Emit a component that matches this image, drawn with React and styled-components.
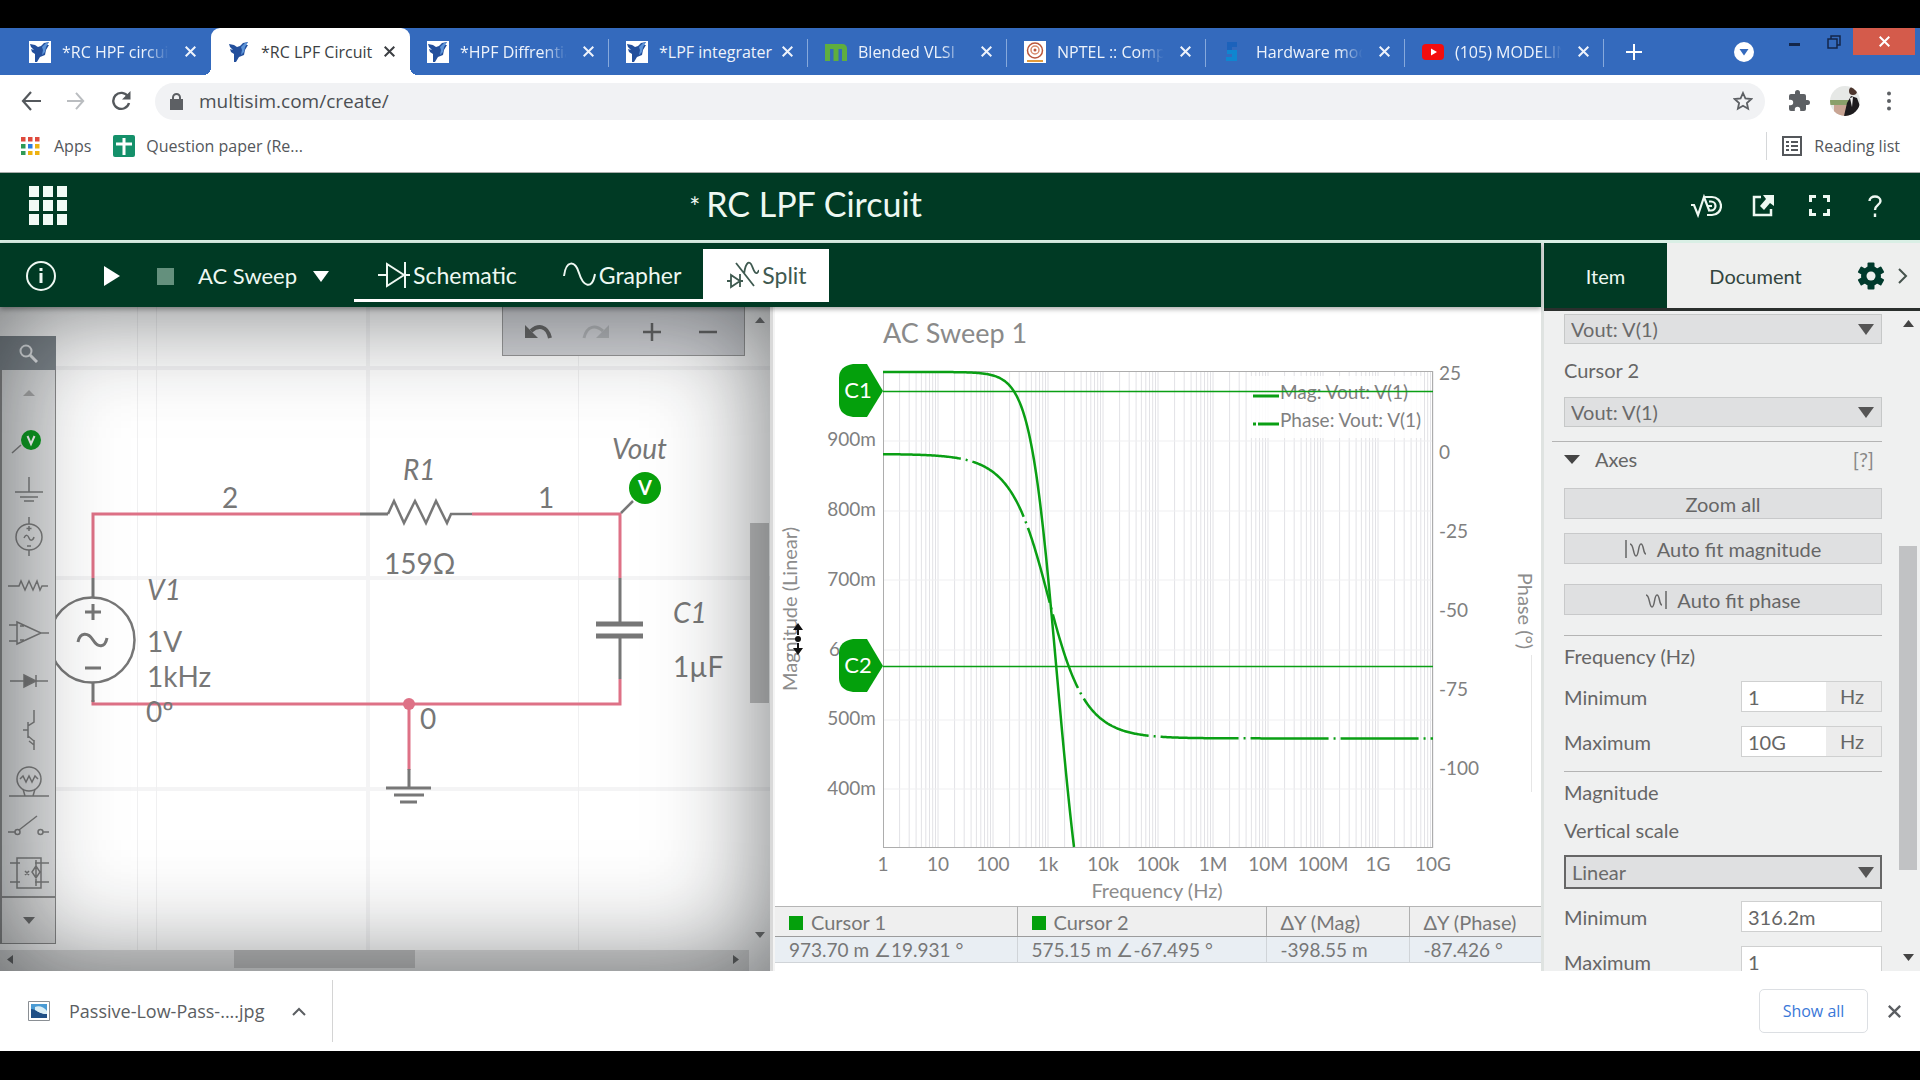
import React from "react";
import styled, { createGlobalStyle, css } from "styled-components";

const lato = `Lato, "Open Sans", sans-serif`;
const chromeFont = `"Open Sans", "Noto Sans", sans-serif`;
const green = "#003a24";
const trace = "#0a9f14";

const Global = createGlobalStyle`
  * { box-sizing: border-box; }
  body { margin: 0; background: #000; font-family: ${lato}; color: #666; }
  button, input, select { font: inherit; color: inherit; margin: 0; border-radius: 0; }
  button { border: 0; padding: 0; background: none; cursor: pointer; }
  svg { display: block; flex: none; }
`;

const Screen = styled.div`
  display: flex;
  flex-direction: column;
  min-height: 100vh;
  padding: 28px 0 29px;
  background: #000;
`;

/* ---------- browser chrome ---------- */
const TabStrip = styled.div`
  display: flex;
  height: 47px;
  padding-left: 12px;
  background: #346abd;
  font: 16px/24px ${chromeFont};
`;
const Tab = styled.div`
  position: relative;
  display: flex;
  align-items: center;
  width: 199px;
  padding: 0 14px 0 17px;
  gap: 11px;
  color: ${(p) => (p.$active ? "#3c3f43" : "#eef3fb")};
  ${(p) =>
    p.$active
      ? css`
          background: #fff;
          border-radius: 9px 9px 0 0;
          &::before, &::after {
            content: "";
            position: absolute;
            bottom: 0;
            width: 8px;
            height: 8px;
          }
          &::before { left: -8px; background: radial-gradient(circle at 0 0, #346abd 8px, #fff 8px); }
          &::after { right: -8px; background: radial-gradient(circle at 100% 0, #346abd 8px, #fff 8px); }
        `
      : ""}
  ${(p) =>
    p.$divider
      ? css`
          &::after {
            content: "";
            position: absolute;
            right: 0;
            top: 11px;
            width: 1px;
            height: 28px;
            background: #86a9dc;
          }
        `
      : ""}
`;
const TabTitle = styled.button`
  flex: 1;
  min-width: 0;
  margin-right: -6px;
  overflow: hidden;
  white-space: nowrap;
  text-align: left;
  ${(p) => (p.$fade ? "mask-image: linear-gradient(90deg, #000 72%, transparent 92%);" : "")}
`;
const IconButton = styled.button`
  display: grid;
  place-items: center;
  flex: none;
  width: ${(p) => p.$w || 24}px;
  height: ${(p) => p.$h || 24}px;
  color: ${(p) => p.$c || "inherit"};
`;
const TabClose = styled(IconButton)`width: 14px;`;
const WindowControls = styled.div`
  display: flex;
  align-items: flex-start;
  margin-left: auto;
  color: #13264a;
`;
const WindowClose = styled(IconButton)`
  width: 62px;
  height: 27px;
  margin: 0 5px 0 7px;
  background: #d45b4b;
  color: #fff;
`;
const AddressRow = styled.div`
  display: flex;
  align-items: center;
  height: 52px;
  padding: 0 16px;
  background: #fff;
  color: #5d6064;
`;
const Omnibox = styled.label`
  display: flex;
  flex: 1;
  align-items: center;
  gap: 16px;
  height: 37px;
  margin: 0 22px 0 19px;
  padding: 0 10px 0 15px;
  border-radius: 19px;
  background: #f1f2f4;
  input {
    flex: 1;
    min-width: 0;
    padding: 0;
    border: 0;
    outline: 0;
    background: none;
    color: #4c4f53;
    font: 19px/24px ${chromeFont};
  }
`;
const Avatar = styled.button`
  width: 30px;
  height: 30px;
  margin: 0 14px 0 19px;
  overflow: hidden;
  border-radius: 50%;
`;
const Bookmarks = styled.nav`
  display: flex;
  align-items: center;
  height: 46px;
  padding: 0 20px 7px;
  border-bottom: 1px solid #a8adab;
  background: #fff;
  color: #54575b;
  font: 16px/24px ${chromeFont};
`;
const Bookmark = styled.a`
  display: flex;
  align-items: center;
  gap: ${(p) => p.$gap}px;
  margin-right: 22px;
  color: inherit;
  text-decoration: none;
`;
const ReadingList = styled.button`
  display: flex;
  align-items: center;
  gap: 12px;
  height: 28px;
  margin-left: auto;
  padding-left: 15px;
  border-left: 1px solid #d5d7d9;
`;

/* ---------- application header ---------- */
const AppHeader = styled.header`
  display: grid;
  grid-template-columns: 1fr auto 1fr;
  align-items: center;
  height: 70px;
  padding: 0 30px 2px 28px;
  border-bottom: 3px solid #d9efe5;
  background: ${green};
  color: #eef8f2;
  h1 { margin: 0; font: 400 34px/44px ${lato}; }
`;
const Star = styled.span`
  margin-right: 6px;
  font-size: 26px;
`;
const TitleSlot = styled.div`
  padding-right: 307px;
`;
const HeaderActions = styled.div`
  display: flex;
  justify-content: flex-end;
  gap: 26px;
`;
const Body = styled.div`
  display: flex;
  flex: 1;
  min-height: 0;
  background: #fff;
`;
const LeftColumn = styled.div`
  display: flex;
  flex: 1;
  flex-direction: column;
  min-width: 0;
`;
const Toolbar = styled.div`
  position: relative;
  z-index: 2;
  display: flex;
  align-items: center;
  height: 64px;
  padding: 2px 0 0 22px;
  background: ${green};
  box-shadow: 0 2px 5px rgba(0, 0, 0, 0.35);
  color: #eef8f2;
  font: 22px/28px ${lato};
`;
const SimulationType = styled.button`
  display: flex;
  align-items: center;
  gap: 16px;
  margin: 0 25px 0 24px;
`;
const Views = styled.div`
  display: flex;
  align-self: flex-end;
  height: 53px;
  margin-bottom: 5px;
  font-size: 23px;
`;
const View = styled.button`
  display: flex;
  align-items: center;
  gap: 3px;
  padding: 2px 22px 0 24px;
  border-bottom: 3px solid #fff;
  background: ${(p) => (p.$on ? "#fff" : "none")};
  color: ${(p) => (p.$on ? "#3f5a50" : "#eef8f2")};
`;
const Panes = styled.div`
  display: grid;
  grid-template-columns: 770fr 5px 766fr;
  flex: 1;
`;
const Splitter = styled.div`
  border-left: 3px solid #d9d9d9;
  background: #f4f4f4;
`;

/* ---------- schematic ---------- */
const SchematicPane = styled.section`
  position: relative;
  display: grid;
  grid-template: 1fr 21px / 56px 1fr 21px;
  overflow: hidden;
  &::after {
    content: "";
    position: absolute;
    inset: 0;
    pointer-events: none;
    box-shadow: inset 0 0 110px rgba(20, 24, 28, 0.62);
  }
`;
const Circuit = styled.svg`
  position: absolute;
  left: 0;
  top: 0;
  font: 28px ${lato};
  fill: #777;
`;
const Palette = styled.div`
  position: relative;
  display: flex;
  flex-direction: column;
  padding-top: 29px;
`;
const Search = styled(IconButton)`
  width: 56px;
  height: 34px;
  background: #80888e;
  color: #eef0f2;
`;
const PartList = styled.div`
  display: flex;
  flex-direction: column;
  border: solid #8b8b8b;
  border-width: 0 1px 2px 2px;
  background: #dfe0e1;
`;
const PaletteEnd = styled(IconButton)`
  width: 56px;
  height: 46px;
  border: solid #8b8b8b;
  border-width: 0 1px 1px 2px;
  background: #e2e2e2;
  color: #6d6d6d;
`;
const EditBar = styled.div`
  position: relative;
  display: flex;
  align-items: center;
  justify-content: space-around;
  justify-self: end;
  width: 243px;
  height: 49px;
  margin-right: 4px;
  padding: 2px 8px 0;
  border: 1px solid #999;
  border-top: 0;
  background: #d3d4d8;
  color: #666;
`;
const VScroll = styled.div`
  position: relative;
  display: flex;
  flex-direction: column;
  align-items: center;
  justify-content: space-between;
  padding: 10px 0 12px;
  color: #777;
`;
const HScroll = styled.div`
  position: relative;
  display: flex;
  grid-column: 1 / 3;
  align-items: center;
  justify-content: space-between;
  padding: 0 10px 3px 7px;
  background: #dedede;
  color: #666;
`;
const Thumb = styled.div`
  width: ${(p) => p.$w}px;
  height: ${(p) => p.$h}px;
  margin: ${(p) => p.$m || "0"};
  background: ${(p) => p.$bg || "#c4c4c4"};
`;

/* ---------- grapher ---------- */
const GraphPane = styled.section`
  display: flex;
  flex-direction: column;
  background: #fff;
`;
const Plot = styled.svg`
  font: 19px ${lato};
  fill: #808080;
`;
const Readout = styled.table`
  width: 100%;
  border-collapse: collapse;
  table-layout: fixed;
  color: #777;
  font: 20px/24px ${lato};
  th, td {
    padding: 0 0 0 14px;
    border-right: 1px solid #b0b0b0;
    font-weight: 400;
    text-align: left;
    white-space: nowrap;
  }
  th { height: 30px; border-top: 1px solid #b5b5b5; border-bottom: 1px solid #9c9c9c; background: #efefef; }
  td { height: 26px; border-color: #d0d4d8; border-bottom: 1px solid #d0d4d8; background: #e9eef3; font-size: 19px; }
  th:last-child, td:last-child { border-right: 0; }
`;
const Swatch = styled.span`
  display: inline-block;
  width: 14px;
  height: 14px;
  margin-right: 8px;
  background: #04a00c;
`;

/* ---------- side panel ---------- */
const Side = styled.aside`
  display: flex;
  flex-direction: column;
  width: 379px;
  border-left: 3px solid #dfe3e1;
  background: #eff0f0;
  font: 20px/26px ${lato};
`;
const SideTabs = styled.div`
  display: flex;
  align-items: center;
  height: 68px;
  padding-right: 12px;
  border-bottom: 3px solid #2a2f2d;
  background: #eeefee;
`;
const SideTab = styled.button`
  align-self: stretch;
  flex: ${(p) => (p.$on ? "0 0 123px" : "1")};
  background: ${(p) => (p.$on ? green : "none")};
  color: ${(p) => (p.$on ? "#eef8f2" : "#33453e")};
`;
const SideBody = styled.div`
  display: flex;
  flex: 1 1 0;
  min-height: 0;
  overflow: hidden;
`;
const Form = styled.form`
  flex: 1;
  padding: 3px 16px 0 20px;
`;
const Rule = styled.hr`
  margin: ${(p) => p.$m};
  border: 0;
  border-top: 1px solid #b4b4b4;
`;
const Caption = styled.div`
  display: block;
  margin: ${(p) => p.$m};
`;
const SelectBox = styled.div`
  position: relative;
  margin-bottom: ${(p) => (p.$focus ? 12 : 0)}px;
  select {
    display: block;
    width: 100%;
    height: ${(p) => (p.$focus ? 34 : 30)}px;
    padding: 0 6px;
    appearance: none;
    border: ${(p) => (p.$focus ? "2px solid #666" : "1px solid #c6c8c8")};
    outline: 0;
    background: #dfe0e1;
    color: #6a6a6a;
  }
  svg {
    position: absolute;
    right: 8px;
    top: 50%;
    margin-top: -5px;
    pointer-events: none;
  }
`;
const Section = styled.div`
  display: flex;
  align-items: center;
  height: 28px;
  margin-bottom: 15px;
  padding-right: 8px;
  a { margin-left: auto; color: #888; text-decoration: none; }
  button { display: flex; align-items: center; gap: 15px; }
`;
const FormButton = styled.button`
  display: flex;
  align-items: center;
  justify-content: center;
  gap: 10px;
  width: 100%;
  height: 31px;
  margin-bottom: ${(p) => p.$mb}px;
  border: 1px solid #c8c9ca;
  background: #dfe0e1;
`;
const Field = styled.div`
  display: flex;
  align-items: center;
  justify-content: space-between;
  margin-bottom: 14px;
`;
const FieldBox = styled.div`
  display: flex;
  width: 141px;
  height: 31px;
  border: 1px solid #cfd0d0;
  input { flex: 1; min-width: 0; padding: 0 6px; border: 0; outline: 0; background: #fff; }
  span { width: 55px; padding-left: 14px; background: #ececec; line-height: 28px; }
`;
const SideScroll = styled(VScroll)`
  width: 20px;
  padding: 9px 0 10px;
  margin-right: 2px;
`;

/* ---------- download shelf ---------- */
const Shelf = styled.footer`
  display: flex;
  align-items: center;
  height: 80px;
  background: #fff;
  color: #5b5e62;
  font: 18px/24px ${chromeFont};
`;
const Download = styled.div`
  display: flex;
  align-items: center;
  width: 333px;
  height: 62px;
  padding: 0 18px 0 28px;
  border-right: 1px solid #d4d4d4;
  button:first-of-type { margin: 0 auto 0 19px; }
`;
const ShowAll = styled.button`
  width: 109px;
  height: 44px;
  margin: 0 13px 0 auto;
  border: 1px solid #dcdfe3;
  border-radius: 5px;
  color: #3b78d8;
  font-size: 16px;
`;

const Cross = ({ s = 11, w = 2 }) => (
  <svg width={s} height={s} viewBox="0 0 11 11" stroke="currentColor" strokeWidth={w}>
    <path d="M.7.7l9.6 9.6M10.3.7L.7 10.3" />
  </svg>
);
const Tri = ({ dir = "down", w = 16, h = 10, c = "currentColor" }) => (
  <svg width={w} height={h} viewBox="0 0 16 10" preserveAspectRatio="none" fill={c}>
    <path d={dir === "down" ? "M0 0H16L8 10z" : "M0 10H16L8 0z"} />
  </svg>
);
const Eagle = ({ boxed }) => (
  <svg width="22" height="22" viewBox="0 0 22 22">
    {boxed && <path fill="#fff" d="M0 0h22v22H0z" />}
    <path fill="#234f9c" d="M1 3l5 1 3 2 3-1 3-3 5-1-2 3 2 0-3 5-1 5-5 2-3 5-2 0 0-8-3-2-1-3 3 1-3-3z" />
    <path fill="#5b93d8" d="M13 6l4-4 3-1-3 5-1 5-3 3 1-5z" />
  </svg>
);
const favicons = {
  ni: <Eagle boxed />,
  niActive: <Eagle />,
  m: (
    <svg width="22" height="22" viewBox="0 0 22 22">
      <path fill="none" stroke="#5fae3f" strokeWidth="5" d="M2.500 20V5.500H17.500a2 2 0 012 2V20M11 5V20" />
    </svg>
  ),
  nptel: (
    <svg width="22" height="22" viewBox="0 0 22 22">
      <path fill="#fff" d="M0 0h22v22H0z" />
      <circle cx="11" cy="9.500" r="7.500" fill="none" stroke="#b9573d" strokeWidth="1.500" />
      <circle cx="11" cy="9" r="4" fill="none" stroke="#d88a6c" strokeWidth="1.500" />
      <circle cx="11" cy="9" r="1.500" fill="#b9573d" />
      <path stroke="#e29a3b" strokeWidth="2" d="M3 20h16" />
    </svg>
  ),
  s: (
    <svg width="22" height="22" viewBox="0 0 22 22">
      <path fill="#1c62bb" d="M4 1h10v5H9v4H4z" />
      <path fill="#0f86d0" d="M4 9h10v11H3v-4h6v-3H4z" />
    </svg>
  ),
  yt: (
    <svg width="22" height="22" viewBox="0 0 22 22">
      <rect y="3" width="22" height="16" rx="4" fill="#f30d0d" />
      <path fill="#fff" d="M9 7.500v7l6-3.500z" />
    </svg>
  ),
};
const tabs = [
  ["ni", "*RC HPF circuit", true],
  ["niActive", "*RC LPF Circuit"],
  ["ni", "*HPF Diffrentia", true],
  ["ni", "*LPF integrater"],
  ["m", "Blended VLSI", true],
  ["nptel", "NPTEL :: Comp", true],
  ["s", "Hardware mod", true],
  ["yt", "(105) MODELIN", true],
];

const partIcons = [
  <g key="v"><path d="M9 37l9-8" /><circle cx="28" cy="24" r="10" fill="#0a9a1e" stroke="none" /><path stroke="#fff" strokeWidth="2" d="M24.500 20l3.500 8 3.500-8" /></g>,
  <path key="g" d="M26 13v15M12 28h28M17 33h18M21 37h10" />,
  <g key="s"><circle cx="26" cy="25" r="13" /><path d="M26 5v7M26 38v6M26 14v5M23.500 16.500h5M24 34h4M21 26c2-4 4-3 5 0s4 3 5-1" /></g>,
  <path key="r" d="M5 26h11l2-5 4 9 4-9 4 9 4-9 3 9 2-4h6" />,
  <path key="o" d="M14 14v22l24-11zM6 17h8M6 33h8M38 25h8M17 18h4M17 32h4" />,
  <g key="d"><path d="M7 25h38M33 19v12" /><path fill="#777" d="M21 19v12l12-6z" /></g>,
  <path key="t" d="M31 6v12l-6 4v10l6 5v9M25 18v16M20 26h5M26 37l5 4 0-5" />,
  <g key="l"><circle cx="26" cy="27" r="12" /><path d="M6 44h40M20 37l2 7h8l2-7M17 27l3-3 3 6 3-6 3 6 3-6 3 3" /></g>,
  <path key="w" d="M5 32h7M16 30L34 16M40 32h6M12 32a2.500 2.500 0 105 0 2.500 2.500 0 10-5 0M35 32a2.500 2.500 0 105 0 2.500 2.500 0 10-5 0" />,
  <path key="b" d="M14 10h24v30H14zM7 15h10M7 34h10M32 15h14M32 34h14M33 12v26M33 18l-4 6 4 6 4-6zM22 23l4 4M26 23l-4 4" />,
];
const partNames = ["Probe", "Ground", "Source", "Resistor", "Amplifier", "Diode", "Transistor", "Indicator", "Switch", "Block"];

const CircuitDrawing = () => (
  <Circuit width="770" height="664" viewBox="0 307 770 664">
    <path d="M368 307V971M0 368H770M0 578H770M0 789H770" stroke="#f4f4f5" strokeWidth="4" />
    <path d="M156.500 307V971M578.500 307V971M137.500 307V971" stroke="#f0f0f1" strokeWidth="1" />
    <g fill="none" stroke="#de7186" strokeWidth="3">
      <path d="M93 578V514H360M472 514H620V578M620 679V704H93V700M409 704V770" />
    </g>
    <g fill="none" stroke="#777" strokeWidth="2.500">
      <circle cx="92" cy="640" r="42.500" fill="#fff" />
      <path strokeWidth="3" d="M93 578V597M93 683V702M620 578V623M620 637V679M409 769V788M360 514H388" />
      <path d="M388 514L394 501 404 523 415 501 426 523 436 501 447 523 451 514H472" />
      <path strokeWidth="3" d="M93 604V620M85 612H101M85 668H101M78 642c2-10 10-10 15-2s12 8 14-2" />
      <path strokeWidth="5" d="M596 624H643M596 636H643" />
      <path strokeWidth="3" d="M386 788H431M394 795H424M400 802H417" />
      <path d="M621 513L633 501" />
    </g>
    <circle cx="409" cy="704" r="6" fill="#de7186" />
    <circle cx="645" cy="488" r="16" fill="#08a00c" />
    <text x="645" y="495" textAnchor="middle" fontSize="20" fontWeight="700" fill="#fff">V</text>
    <g fontStyle="italic">
      <text x="612" y="459">Vout</text>
      <text x="403" y="480">R1</text>
      <text x="673" y="623">C1</text>
      <text x="147" y="600">V1</text>
    </g>
    <text x="222" y="508">2</text>
    <text x="538" y="508">1</text>
    <text x="384" y="574">159Ω</text>
    <text x="673" y="677">1µF</text>
    <text x="147" y="652">1V</text>
    <text x="147" y="687">1kHz</text>
    <text x="146" y="722">0º</text>
    <text x="420" y="729">0</text>
  </Circuit>
);

const X0 = 883;
const DEC = 55;
const magY = (m) => 371 + (1 - m) * 698;
const phaseY = (deg) => 453 - (deg * 79) / 25;
const sample = (fn, end) => {
  let d = "";
  for (let x = X0; x <= end; x += 1) {
    const f = Math.pow(10, (x - X0) / DEC) / 1000;
    d += `${d ? "L" : "M"}${x} ${Math.min(fn(f), 847).toFixed(2)}`;
  }
  return d;
};
const magPath = sample((f) => magY(1 / Math.sqrt(1 + f * f)) + 1, 1074);
const phasePath = sample((f) => phaseY((-Math.atan(f) * 180) / Math.PI) + 1, 1433);
let minor = "";
for (let d = 0; d < 10; d++) for (let n = 2; n <= 10; n++) minor += `M${(X0 + (d + Math.log10(n)) * DEC).toFixed(1)} 371V848`;

const Marker = ({ y, children }) => (
  <g>
    <path fill="#04a00c" d={`M853 ${y - 27}H867L883 ${y}L867 ${y + 26}H853Q839 ${y + 24} 839 ${y + 12}V${y - 13}Q839 ${y - 25} 853 ${y - 27}z`} />
    <text x="858" y={y + 7} textAnchor="middle" fontSize="22" fill="#fff">{children}</text>
  </g>
);

const PlotDrawing = () => (
  <Plot width="100%" height="599" viewBox="775 307 766 599">
    <text x="883" y="343" fontSize="27" fill="#8a8a8a">AC Sweep 1</text>
    <path d={minor} stroke="#e2e2e6" strokeWidth="1" />
    <path d="M883 441H1433M883 511H1433M883 580H1433M883 650H1433M883 720H1433M883 789H1433" stroke="#efeff1" />
    <rect x="883.5" y="371.5" width="549" height="476" fill="none" stroke="#adadad" />
    <rect x="1250" y="376" width="174" height="62" fill="#fff" opacity=".85" />
    {[["900m", 446], ["800m", 516], ["700m", 586], ["500m", 725], ["400m", 795]].map(([t, y]) => (
      <text key={t} x="876" y={y} textAnchor="end">{t}</text>
    ))}
    <text x="840" y="656" textAnchor="end">6</text>
    {[25, 0, -25, -50, -75, -100].map((t, i) => (
      <text key={t} x="1439" y={380 + i * 79}>{t}</text>
    ))}
    {["1", "10", "100", "1k", "10k", "100k", "1M", "10M", "100M", "1G", "10G"].map((t, i) => (
      <text key={t} x={X0 + i * DEC} y="871" textAnchor="middle">{t}</text>
    ))}
    <g fontSize="20" textAnchor="middle" fill="#8c8c8c">
      <text x="1157" y="898">Frequency (Hz)</text>
      <text transform="translate(797 609) rotate(-90)">Magnitude (Linear)</text>
      <text transform="translate(1518 611) rotate(90)">Phase (°)</text>
    </g>
    <path d="M1531.500 655V792" stroke="#e6e6e6" />
    <text x="1280" y="399">Mag: Vout: V(1)</text>
    <text x="1280" y="427">Phase: Vout: V(1)</text>
    <path d="M883 391.500H1433M883 666.500H1433" stroke={trace} strokeWidth="1.500" />
    <path d="M1253 396H1279M1253 424H1256M1258 424H1279" stroke={trace} strokeWidth="3" />
    <g fill="none" stroke={trace} strokeWidth="2.500">
      <path d={magPath} />
      <path d={phasePath} strokeDasharray="78 5 2 5" />
    </g>
    <Marker y={391}>C1</Marker>
    <Marker y={666}>C2</Marker>
    <path d="M798 623l5 7h-4v5h-2v-5h-4zM798 655l-5-7h4v-5h2v5h4z" fill="#111" />
    <circle cx="798" cy="639" r="3" fill="#111" />
  </Plot>
);

const Dropdown = ({ id, label, value, focus }) => (
  <SelectBox $focus={focus}>
    <select id={id} aria-label={label} defaultValue={value}>
      <option>{value}</option>
    </select>
    <Tri w={16} h={11} c="#555" />
  </SelectBox>
);
const NumberField = ({ id, label, value, unit }) => (
  <Field>
    <label htmlFor={id}>{label}</label>
    <FieldBox>
      <input id={id} defaultValue={value} />
      {unit && <span>{unit}</span>}
    </FieldBox>
  </Field>
);

export default function App() {
  return (
    <Screen>
      <Global />
      <TabStrip>
        {tabs.map(([icon, title, fade], i) => (
          <Tab key={i} $active={i === 1} $divider={i > 1}>
            {favicons[icon]}
            <TabTitle $fade={fade}>{title}</TabTitle>
            <TabClose aria-label="Close tab"><Cross /></TabClose>
          </Tab>
        ))}
        <IconButton $w={60} $h={47} $c="#fff" aria-label="New tab">
          <svg width="16" height="16" viewBox="0 0 16 16" stroke="currentColor" strokeWidth="2"><path d="M8 0v16M0 8h16" /></svg>
        </IconButton>
        <WindowControls>
          <IconButton $w={44} $h={47} aria-label="Search tabs">
            <svg width="20" height="20" viewBox="0 0 20 20"><circle cx="10" cy="10" r="10" fill="#fff" /><path d="M5.500 7h9L10 13.500z" fill="#346abd" /></svg>
          </IconButton>
          <IconButton $w={56} $h={32} aria-label="Minimise">
            <svg width="11" height="3" viewBox="0 0 11 3"><path fill="currentColor" d="M0 0h11v3H0z" /></svg>
          </IconButton>
          <IconButton $w={24} $h={27} aria-label="Restore">
            <svg width="14" height="14" viewBox="0 0 14 14" fill="none" stroke="currentColor" strokeWidth="1.500"><path d="M1 4h9v9H1zM4 4V1h9v9h-3" /></svg>
          </IconButton>
          <WindowClose aria-label="Close"><Cross s={11} /></WindowClose>
        </WindowControls>
      </TabStrip>
      <AddressRow>
        <IconButton $w={30} aria-label="Back">
          <svg width="20" height="20" viewBox="0 0 20 20" fill="none" stroke="#54585c" strokeWidth="2.200"><path d="M20 10H2M10 1L2 10l8 9" /></svg>
        </IconButton>
        <IconButton $w={60} aria-label="Forward">
          <svg width="18" height="18" viewBox="0 0 20 20" fill="none" stroke="#babdc0" strokeWidth="2.200"><path d="M0 10h18M10 1l8 9-8 9" /></svg>
        </IconButton>
        <IconButton $w={30} aria-label="Reload">
          <svg width="20" height="20" viewBox="0 0 20 20"><path fill="none" stroke="#54585c" strokeWidth="2.400" d="M17 5.500A8 8 0 1018 12" /><path fill="#54585c" d="M19.500 0v8.500H11z" /></svg>
        </IconButton>
        <Omnibox>
          <svg width="13" height="17" viewBox="0 0 13 17"><path fill="#5d6064" d="M0 6h13v11H0z" /><path fill="none" stroke="#5d6064" strokeWidth="2" d="M3 7V4.500a3.500 3.500 0 017 0V7" /></svg>
          <input aria-label="Address" defaultValue="multisim.com/create/" />
          <IconButton aria-label="Bookmark this tab">
            <svg width="20" height="20" viewBox="0 0 20 20" fill="none" stroke="currentColor" strokeWidth="1.800"><path d="M10 2l2.400 5.400 5.900.6-4.400 4 1.200 5.800L10 14.800l-5.100 3L6.100 12 1.700 8l5.900-.6z" /></svg>
          </IconButton>
        </Omnibox>
        <IconButton aria-label="Extensions">
          <svg width="24" height="24" viewBox="0 0 24 24" fill="currentColor"><path d="M20.500 11H19V7a2 2 0 00-2-2h-4V3.500a2.500 2.500 0 00-5 0V5H4a2 2 0 00-2 2v3.800h1.500a2.700 2.700 0 010 5.400H2V20a2 2 0 002 2h3.800v-1.500a2.700 2.700 0 015.400 0V22H17a2 2 0 002-2v-4h1.500a2.500 2.500 0 000-5z" /></svg>
        </IconButton>
        <Avatar aria-label="Profile">
          <svg width="30" height="30" viewBox="0 0 30 30">
            <path fill="#e6e8e6" d="M0 0h30v30H0z" /><path fill="#8aa06a" d="M0 14h20v5H0z" /><path fill="#c9a594" d="M4 19h16v11H4z" />
            <path fill="#1d1b1e" d="M14 30l3-13 4-7 6 2 3 8-4 10z" /><circle cx="23" cy="5" r="4" fill="#4c352d" /><path fill="#eee" d="M20 12l3-1-1 10z" />
          </svg>
        </Avatar>
        <IconButton $w={30} aria-label="Menu">
          <svg width="4" height="20" viewBox="0 0 4 20" fill="currentColor"><circle cx="2" cy="2.500" r="2" /><circle cx="2" cy="10" r="2" /><circle cx="2" cy="17.500" r="2" /></svg>
        </IconButton>
      </AddressRow>
      <Bookmarks>
        <Bookmark href="#apps" $gap={14}>
          <svg width="20" height="18" viewBox="0 0 20 18">
            {["#df4a3c", "#df4a3c", "#df4a3c", "#2f9a55", "#2b7de0", "#eeb211", "#2f9a55", "#eeb211", "#eeb211"].map((c, i) => (
              <rect key={i} x={(i % 3) * 7 + 1} y={Math.floor(i / 3) * 7} width="4.500" height="4.500" fill={c} />
            ))}
          </svg>
          Apps
        </Bookmark>
        <Bookmark href="#question-paper" $gap={11}>
          <svg width="22" height="22" viewBox="0 0 22 22"><rect width="22" height="22" rx="2" fill="#14906a" /><path stroke="#fff" strokeWidth="3" d="M11 3v17M3 9h16" /></svg>
          Question paper (Re...
        </Bookmark>
        <ReadingList>
          <svg width="20" height="20" viewBox="0 0 20 20" fill="none" stroke="currentColor" strokeWidth="2"><path d="M1 1h18v18H1zM4 6h3M4 10h3M4 14h3M9 6h7M9 10h7M9 14h7" /></svg>
          Reading list
        </ReadingList>
      </Bookmarks>

      <AppHeader>
        <IconButton $w={40} $h={40} aria-label="Applications">
          <svg width="39" height="39" viewBox="0 0 39 39" fill="#f1faf5">
            {[0, 14, 28].map((y) => [0, 14, 28].map((x) => <rect key={`${x}-${y}`} x={x} y={y} width="10" height="11" />))}
          </svg>
        </IconButton>
        <TitleSlot><h1><Star>*</Star>RC LPF Circuit</h1></TitleSlot>
        <HeaderActions>
          <IconButton $w={32} aria-label="Live simulation">
            <svg width="31" height="24" viewBox="0 0 31 24" fill="none" stroke="#eef8f2" strokeWidth="2.200"><path d="M0 11h3l4 10 6-18 5 13M14 3h7a9 9 0 010 18h-5M18 7.500h2a4.500 4.500 0 010 9h-3M17 12h4" /></svg>
          </IconButton>
          <IconButton $w={30} aria-label="Share">
            <svg width="23" height="23" viewBox="0 0 23 23"><path fill="none" stroke="#eef8f2" strokeWidth="2.500" d="M9 3H2v18h17v-6" /><path fill="#eef8f2" d="M11 1h11v11l-4-3-6 7-4-4 6-7z" /></svg>
          </IconButton>
          <IconButton $w={30} aria-label="Full screen">
            <svg width="21" height="21" viewBox="0 0 21 21" fill="none" stroke="#eef8f2" strokeWidth="3"><path d="M1.500 7V1.500H7M14 1.500h5.500V7M19.500 14v5.500H14M7 19.500H1.500V14" /></svg>
          </IconButton>
          <IconButton $w={30} aria-label="Help">
            <svg width="14" height="22" viewBox="0 0 14 22" fill="none" stroke="#eef8f2" strokeWidth="2.400"><path d="M1.500 6c0-6 11-6 11 0 0 4-5.500 4-5.500 9M7 18.500V22" /></svg>
          </IconButton>
        </HeaderActions>
      </AppHeader>

      <Body>
        <LeftColumn>
          <Toolbar>
            <IconButton $w={38} $h={38} aria-label="Information">
              <svg width="30" height="30" viewBox="0 0 30 30" fill="none" stroke="currentColor" strokeWidth="2"><circle cx="15" cy="15" r="14" /><path strokeWidth="3" d="M15 12v10M15 7v3" /></svg>
            </IconButton>
            <IconButton $w={97} aria-label="Run">
              <svg width="22" height="20" viewBox="0 0 22 20"><path fill="#fff" d="M6 0v20l16-10z" /></svg>
            </IconButton>
            <IconButton $w={17} aria-label="Stop">
              <svg width="17" height="17" viewBox="0 0 17 17"><path fill="#64907d" d="M0 0h17v17H0z" /></svg>
            </IconButton>
            <SimulationType>AC Sweep <Tri w={16} h={11} c="#fff" /></SimulationType>
            <Views>
              <View>
                <svg width="32" height="28" viewBox="0 0 32 28" fill="none" stroke="currentColor" strokeWidth="2"><path d="M0 14h9M9 3v22l17-11zM27 1v26M27 14h5" /></svg>
                Schematic
              </View>
              <View>
                <svg width="33" height="26" viewBox="0 0 33 26" fill="none" stroke="currentColor" strokeWidth="2"><path d="M1 14C3 -2 12 -2 16 11s13 18 16 1" /></svg>
                Grapher
              </View>
              <View $on>
                <svg width="32" height="28" viewBox="0 0 32 28" fill="none" stroke="currentColor" strokeWidth="1.800"><path d="M0 20h4M4 14v12l9-6zM13 13v13M9 2l18 23M17 13C19 -1 23 0 25 5s4 11 7 4M13 20h3" /></svg>
                Split
              </View>
            </Views>
          </Toolbar>
          <Panes>
            <SchematicPane>
              <CircuitDrawing />
              <Palette>
                <Search aria-label="Search parts">
                  <svg width="19" height="19" viewBox="0 0 19 19" fill="none" stroke="currentColor" strokeWidth="2"><circle cx="7" cy="7" r="5.500" /><path strokeWidth="3" d="M11 11l7 7" /></svg>
                </Search>
                <PartList>
                  <IconButton $w={53} $h={46} $c="#aaa" aria-label="Scroll up"><Tri dir="up" w={12} h={6} /></IconButton>
                  {partIcons.map((icon, i) => (
                    <IconButton key={i} $w={53} $h={48} aria-label={partNames[i]}>
                      <svg width="52" height="48" viewBox="0 0 52 48" fill="none" stroke="#7c7c7c" strokeWidth="1.500">{icon}</svg>
                    </IconButton>
                  ))}
                </PartList>
                <PaletteEnd aria-label="Scroll down"><Tri w={12} h={7} /></PaletteEnd>
              </Palette>
              <EditBar>
                <IconButton $w={28} aria-label="Undo">
                  <svg width="28" height="18" viewBox="0 0 28 18"><path fill="none" stroke="currentColor" strokeWidth="4" d="M6 8c7-6 16-6 19 7" /><path fill="currentColor" d="M0 2v13h13z" /></svg>
                </IconButton>
                <IconButton $w={28} $c="#b4b6b9" aria-label="Redo">
                  <svg width="28" height="18" viewBox="0 0 28 18"><path fill="none" stroke="currentColor" strokeWidth="3" d="M22 8c-7-6-16-6-19 7" /><path fill="currentColor" d="M28 2v13H15z" /></svg>
                </IconButton>
                <IconButton $w={28} aria-label="Zoom in">
                  <svg width="18" height="18" viewBox="0 0 18 18" stroke="currentColor" strokeWidth="2.500"><path d="M9 0v18M0 9h18" /></svg>
                </IconButton>
                <IconButton $w={28} aria-label="Zoom out">
                  <svg width="18" height="18" viewBox="0 0 18 18" stroke="currentColor" strokeWidth="2.500"><path d="M0 9h18" /></svg>
                </IconButton>
              </EditBar>
              <VScroll>
                <Tri dir="up" w={10} h={6} />
                <Thumb $w={19} $h={180} $m="0 0 30px" />
                <Tri w={10} h={6} />
              </VScroll>
              <HScroll>
                <svg width="6" height="9" viewBox="0 0 6 9" fill="currentColor"><path d="M6 0v9L0 4.500z" /></svg>
                <Thumb $w={181} $h={18} $m="0 98px 0 0" $bg="#bcbcbc" />
                <svg width="6" height="9" viewBox="0 0 6 9" fill="currentColor"><path d="M0 0v9l6-4.500z" /></svg>
              </HScroll>
            </SchematicPane>
            <Splitter />
            <GraphPane>
              <PlotDrawing />
              <Readout>
                <colgroup><col width="242" /><col width="249" /><col width="143" /><col /></colgroup>
                <thead>
                  <tr><th><Swatch />Cursor 1</th><th><Swatch />Cursor 2</th><th>ΔY (Mag)</th><th>ΔY (Phase)</th></tr>
                </thead>
                <tbody>
                  <tr><td>973.70 m ∠19.931 °</td><td>575.15 m ∠-67.495 °</td><td>-398.55 m</td><td>-87.426 °</td></tr>
                </tbody>
              </Readout>
            </GraphPane>
          </Panes>
        </LeftColumn>

        <Side>
          <SideTabs>
            <SideTab $on>Item</SideTab>
            <SideTab>Document</SideTab>
            <IconButton $w={54} $h={40} aria-label="Settings">
              <svg width="28" height="28" viewBox="0 0 28 28"><g fill="#003a2c"><circle cx="14" cy="14" r="10" />{[0, 60, 120].map((a) => <rect key={a} x="10.500" y="0.500" width="7" height="27" rx="1" transform={`rotate(${a} 14 14)`} />)}</g><circle cx="14" cy="14" r="4.500" fill="#eeefee" /></svg>
            </IconButton>
            <svg width="10" height="16" viewBox="0 0 10 16" fill="none" stroke="#45524c" strokeWidth="2"><path d="M1 1l7 7-7 7" /></svg>
          </SideTabs>
          <SideBody>
            <Form onSubmit={(e) => e.preventDefault()}>
              <Dropdown id="cursor1" label="Cursor 1" value="Vout: V(1)" />
              <Caption as="label" htmlFor="cursor2" $m="13px 0 14px">Cursor 2</Caption>
              <Dropdown id="cursor2" value="Vout: V(1)" />
              <Rule $m="14px 0 3px -12px" />
              <Section>
                <button type="button"><Tri w={16} h={9} c="#444" /> Axes</button>
                <a href="#axes-help">[?]</a>
              </Section>
              <FormButton type="button" $mb={14}>Zoom all</FormButton>
              <FormButton type="button" $mb={20}>
                <svg width="22" height="18" viewBox="0 0 22 18" fill="none" stroke="currentColor" strokeWidth="1.500"><path d="M1 0v18M5 4c4 0 3 12 6 12s2-12 5-12 2 10 5 10" /></svg>
                Auto fit magnitude
              </FormButton>
              <FormButton type="button" $mb={20}>
                <svg width="22" height="18" viewBox="0 0 22 18" fill="none" stroke="currentColor" strokeWidth="1.500"><path d="M21 0v18M1 4c4 0 3 12 6 12s2-12 5-12 2 10 5 10" /></svg>
                Auto fit phase
              </FormButton>
              <Rule $m="0 0 7px" />
              <Caption $m="0 0 12px">Frequency (Hz)</Caption>
              <NumberField id="fmin" label="Minimum" value="1" unit="Hz" />
              <NumberField id="fmax" label="Maximum" value="10G" unit="Hz" />
              <Rule $m="0 0 7px" />
              <Caption $m="0 0 12px">Magnitude</Caption>
              <Caption as="label" htmlFor="vscale" $m="0 0 12px">Vertical scale</Caption>
              <Dropdown id="vscale" value="Linear" focus />
              <NumberField id="mmin" label="Minimum" value="316.2m" />
              <NumberField id="mmax" label="Maximum" value="1" />
            </Form>
            <SideScroll>
              <Tri dir="up" w={11} h={7} c="#444" />
              <Thumb $w={18} $h={324} $m="134px 0 0" $bg="#c1c2c4" />
              <Tri w={11} h={7} c="#444" />
            </SideScroll>
          </SideBody>
        </Side>
      </Body>

      <Shelf>
        <Download>
          <svg width="22" height="20" viewBox="0 0 22 20"><path fill="#fff" stroke="#8a8f94" d="M.5.500h21v19H.5z" /><path fill="#4a9bd4" d="M3 3h16v7H3z" /><path fill="#1f4f86" d="M3 8c5 0 8 5 16 5v4H3z" /><path fill="#d9eef6" d="M7 6c4-2 9 0 12 4v3c-5 0-8-2-12-4z" /></svg>
          <button type="button">Passive-Low-Pass-....jpg</button>
          <IconButton $w={30} aria-label="Download options">
            <svg width="14" height="9" viewBox="0 0 14 9" fill="none" stroke="currentColor" strokeWidth="2"><path d="M1 8l6-6 6 6" /></svg>
          </IconButton>
        </Download>
        <ShowAll>Show all</ShowAll>
        <IconButton $w={26} aria-label="Close downloads bar"><Cross s={13} w={2} /></IconButton>
        <IconButton as="span" $w={13} />
      </Shelf>
    </Screen>
  );
}
